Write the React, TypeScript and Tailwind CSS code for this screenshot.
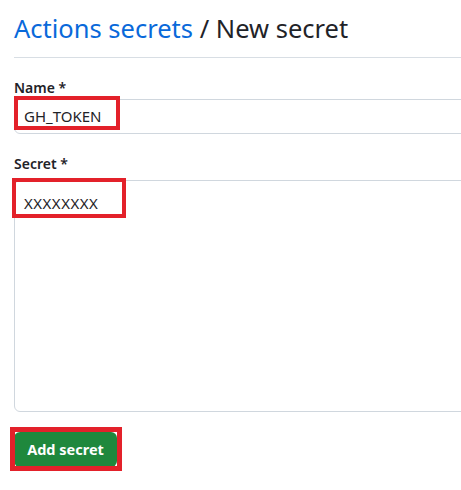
export default function App() {
  return (
    <div
      className="relative w-[461px] h-[490px] overflow-hidden bg-white text-[#1f2328]"
      style={{ fontFamily: '"Noto Sans", "Open Sans", Arial, sans-serif' }}
    >
      <div className="w-[520px] pl-[14px] pt-[12px] flex flex-col">
        {/* Header */}
        <h1 className="text-[25.5px] leading-[32px] font-normal">
          <span className="text-[#0969da]">Actions secrets</span> / New secret
        </h1>
        <div className="mt-[13px] border-t border-[#d8dee4]" />

        {/* Name */}
        <div className="mt-[20px] flex flex-col gap-[1px]">
          <label className="text-[14px] leading-[20px] font-semibold">Name *</label>
          <div className="h-[35px] flex items-center pl-[9px] border border-[#d0d7de] rounded-md text-[15px]">
            GH_TOKEN
          </div>
        </div>

        {/* Secret */}
        <div className="mt-[20px] flex flex-col gap-[6px]">
          <label className="text-[14px] leading-[20px] font-semibold">Secret *</label>
          <div className="h-[232px] pl-[9px] pt-[12px] border border-[#d0d7de] rounded-md text-[15px] leading-[20px] tracking-[0.5px]">
            XXXXXXXX
          </div>
        </div>

        {/* Button */}
        <div className="mt-[20px] flex">
          <button className="h-[35px] w-[103px] rounded-md bg-[#1f883d] text-white text-[14.5px] font-bold">
            Add secret
          </button>
        </div>
      </div>

      {/* red annotation boxes drawn over the form */}
      <div className="absolute left-[14px] top-[96px] w-[106px] h-[34px] border-4 border-[#e3212a]" />
      <div className="absolute left-[12px] top-[178px] w-[114px] h-[40px] border-4 border-[#e3212a]" />
      <div className="absolute left-[10px] top-[427px] w-[112px] h-[44px] border-[5px] border-[#e3212a]" />
    </div>
  );
}
